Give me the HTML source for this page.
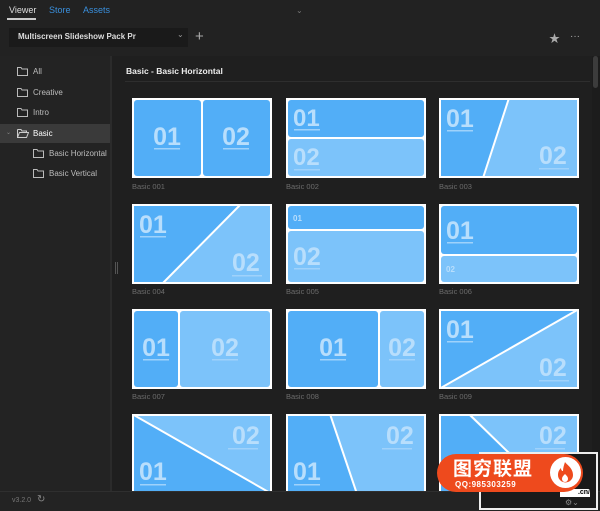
<!DOCTYPE html>
<html><head><meta charset="utf-8"><style>
*{margin:0;padding:0;box-sizing:border-box}
body{width:600px;height:511px;background:#1f1f1f;font-family:"Liberation Sans","Noto Sans CJK SC",sans-serif;position:relative;overflow:hidden;color:#ccc}
.abs{position:absolute}
.tab{position:absolute;top:5px;font-size:9px}
.side{position:absolute;left:0;top:56px;width:110px;height:435px;background:#232323}
.item{position:absolute;left:0;width:110px;height:19px;font-size:8px;color:#bdbdbd;line-height:19px}
.item svg{position:absolute;top:5px}
.lbl{position:absolute;font-size:7.5px;color:#6c6c6c}
svg text{font-family:"Liberation Sans",sans-serif;font-weight:bold;fill:#b8defc}
svg .s{fill:#9fd2fb}
</style></head><body>
<div class="abs" style="left:0;top:0;width:600px;height:56px;background:#222"></div>
<div class="tab" style="left:9px;color:#ddd">Viewer</div>
<div class="abs" style="left:7px;top:18px;width:29px;height:1.5px;background:#ccc"></div>
<div class="tab" style="left:49px;color:#3a8fdc">Store</div>
<div class="tab" style="left:83px;color:#3a8fdc">Assets</div>
<div class="abs" style="left:296px;top:6px;font-size:8px;color:#777">&#8964;</div>
<div class="abs" style="left:9px;top:28px;width:179px;height:19px;background:#1a1a1a"></div>
<div class="abs" style="left:18px;top:32px;font-size:8px;font-weight:bold;color:#ddd">Multiscreen Slideshow Pack Pr</div>
<div class="abs" style="left:177px;top:30px;font-size:8px;color:#999">&#8964;</div>
<div class="abs" style="left:195px;top:28px;font-size:15px;color:#aaa;line-height:18px">+</div>
<div class="abs" style="left:549px;top:30px;font-size:11px;color:#aaa">&#9733;</div>
<div class="abs" style="left:570px;top:33px;font-size:10px;color:#aaa;line-height:8px">&middot;&middot;&middot;</div>
<div class="side"></div>
<div class="abs" style="left:110px;top:56px;width:2px;height:435px;background:#2b2b2b"></div>
<div class="abs" style="left:115px;top:262px;width:3px;height:12px;border-left:1px solid #555;border-right:1px solid #555"></div>
<div class="item" style="top:62px"><svg style="left:17px" width="11" height="9" viewBox="0 0 11 9"><path d="M.5 .5h3.5l1 1.5h5.5v6.5h-10z" fill="none" stroke="#bbb"/></svg><span style="position:absolute;left:33px">All</span></div>
<div class="item" style="top:83px"><svg style="left:17px" width="11" height="9" viewBox="0 0 11 9"><path d="M.5 .5h3.5l1 1.5h5.5v6.5h-10z" fill="none" stroke="#bbb"/></svg><span style="position:absolute;left:33px">Creative</span></div>
<div class="item" style="top:103px"><svg style="left:17px" width="11" height="9" viewBox="0 0 11 9"><path d="M.5 .5h3.5l1 1.5h5.5v6.5h-10z" fill="none" stroke="#bbb"/></svg><span style="position:absolute;left:33px">Intro</span></div>
<div class="item" style="top:124px;background:#3a3a3a;color:#fff"><span style="position:absolute;left:6px;font-size:6px;color:#888">&#8964;</span><svg style="left:17px" width="12" height="9" viewBox="0 0 12 9"><path d="M.5 .5h3.5l1 1.5h4.5v1.5M.5 8.5v-8M.5 8.5l2-5h9l-2 5z" fill="none" stroke="#ccc"/></svg><span style="position:absolute;left:33px">Basic</span></div>
<div class="item" style="top:144px"><svg style="left:33px" width="11" height="9" viewBox="0 0 11 9"><path d="M.5 .5h3.5l1 1.5h5.5v6.5h-10z" fill="none" stroke="#bbb"/></svg><span style="position:absolute;left:49px">Basic Horizontal</span></div>
<div class="item" style="top:164px"><svg style="left:33px" width="11" height="9" viewBox="0 0 11 9"><path d="M.5 .5h3.5l1 1.5h5.5v6.5h-10z" fill="none" stroke="#bbb"/></svg><span style="position:absolute;left:49px">Basic Vertical</span></div>
<div class="abs" style="left:126px;top:66px;font-size:8.5px;font-weight:bold;color:#eee">Basic - Basic Horizontal</div>
<div class="abs" style="left:125px;top:81px;width:465px;height:1px;background:#2e2e2e"></div>
<div class="abs" style="left:592px;top:56px;width:8px;height:435px;background:#1c1c1c"></div>
<div class="abs" style="left:593px;top:56px;width:5px;height:32px;border-radius:3px;background:#3c3c3c"></div>

<svg class="abs" style="left:132px;top:98px" width="140" height="80" viewBox="0 0 140 80">
<rect width="140" height="80" fill="#fff"/><rect x="2" y="2" width="67" height="76" rx="3" fill="#52aef7"/><rect x="71" y="2" width="67" height="76" rx="3" fill="#52aef7"/>
<text x="35" y="47" font-size="25" text-anchor="middle">01</text><text x="104" y="47" font-size="25" text-anchor="middle">02</text>
<rect class="s" x="22" y="50" width="26" height="1.5"/><rect class="s" x="91" y="50" width="26" height="1.5"/></svg>
<div class="lbl" style="left:132px;top:182px">Basic 001</div>
<svg class="abs" style="left:286px;top:98px" width="140" height="80" viewBox="0 0 140 80">
<rect width="140" height="80" fill="#fff"/><rect x="2" y="2" width="136" height="37" rx="3" fill="#52aef7"/><rect x="2" y="41" width="136" height="37" rx="3" fill="#7cc3fa"/>
<text x="7" y="28" font-size="24">01</text><text x="7" y="67" font-size="24">02</text>
<rect class="s" x="8" y="31" width="26" height="1.5"/><rect class="s" x="8" y="71" width="26" height="1.5"/></svg>
<div class="lbl" style="left:286px;top:182px">Basic 002</div>
<svg class="abs" style="left:439px;top:98px" width="140" height="80" viewBox="0 0 140 80">
<rect width="140" height="80" fill="#fff"/><rect x="2" y="2" width="136" height="76" fill="#7cc3fa"/><polygon points="2,2 69,2 44,78 2,78" fill="#52aef7"/><line x1="70" y1="0" x2="44" y2="80" stroke="#fff" stroke-width="2"/>
<text x="7" y="29" font-size="25">01</text><text x="100" y="66" font-size="25">02</text>
<rect class="s" x="8" y="32" width="26" height="1.5"/><rect class="s" x="100" y="70" width="30" height="1.5"/></svg>
<div class="lbl" style="left:439px;top:182px">Basic 003</div>
<svg class="abs" style="left:132px;top:204px" width="140" height="80" viewBox="0 0 140 80">
<rect width="140" height="80" fill="#fff"/><rect x="2" y="2" width="136" height="76" fill="#7cc3fa"/><polygon points="2,2 107,2 32,78 2,78" fill="#52aef7"/><line x1="109" y1="0" x2="30" y2="80" stroke="#fff" stroke-width="2"/>
<text x="7" y="29" font-size="25">01</text><text x="100" y="67" font-size="25">02</text>
<rect class="s" x="8" y="32" width="26" height="1.5"/><rect class="s" x="100" y="71" width="30" height="1.5"/></svg>
<div class="lbl" style="left:132px;top:287px">Basic 004</div>
<svg class="abs" style="left:286px;top:204px" width="140" height="80" viewBox="0 0 140 80">
<rect width="140" height="80" fill="#fff"/><rect x="2" y="2" width="136" height="23" rx="3" fill="#52aef7"/><rect x="2" y="27" width="136" height="51" rx="3" fill="#7cc3fa"/>
<text x="7" y="17" font-size="8">01</text><text x="7" y="61" font-size="25">02</text>
<rect class="s" x="8" y="64" width="26" height="1.5"/></svg>
<div class="lbl" style="left:286px;top:287px">Basic 005</div>
<svg class="abs" style="left:439px;top:204px" width="140" height="80" viewBox="0 0 140 80">
<rect width="140" height="80" fill="#fff"/><rect x="2" y="2" width="136" height="48" rx="3" fill="#52aef7"/><rect x="2" y="52" width="136" height="26" rx="3" fill="#7cc3fa"/>
<text x="7" y="35" font-size="25">01</text><text x="7" y="68" font-size="8">02</text>
<rect class="s" x="8" y="38" width="26" height="1.5"/></svg>
<div class="lbl" style="left:439px;top:287px">Basic 006</div>
<svg class="abs" style="left:132px;top:309px" width="140" height="80" viewBox="0 0 140 80">
<rect width="140" height="80" fill="#fff"/><rect x="2" y="2" width="44" height="76" rx="3" fill="#52aef7"/><rect x="48" y="2" width="90" height="76" rx="3" fill="#7cc3fa"/>
<text x="24" y="47" font-size="25" text-anchor="middle">01</text><text x="93" y="47" font-size="25" text-anchor="middle">02</text>
<rect class="s" x="11" y="50" width="26" height="1.5"/><rect class="s" x="80" y="50" width="26" height="1.5"/></svg>
<div class="lbl" style="left:132px;top:392px">Basic 007</div>
<svg class="abs" style="left:286px;top:309px" width="140" height="80" viewBox="0 0 140 80">
<rect width="140" height="80" fill="#fff"/><rect x="2" y="2" width="90" height="76" rx="3" fill="#52aef7"/><rect x="94" y="2" width="44" height="76" rx="3" fill="#7cc3fa"/>
<text x="47" y="47" font-size="25" text-anchor="middle">01</text><text x="116" y="47" font-size="25" text-anchor="middle">02</text>
<rect class="s" x="34" y="50" width="26" height="1.5"/><rect class="s" x="103" y="50" width="26" height="1.5"/></svg>
<div class="lbl" style="left:286px;top:392px">Basic 008</div>
<svg class="abs" style="left:439px;top:309px" width="140" height="80" viewBox="0 0 140 80">
<rect width="140" height="80" fill="#fff"/><rect x="2" y="2" width="136" height="76" fill="#7cc3fa"/><polygon points="2,2 138,2 2,78" fill="#52aef7"/><line x1="140" y1="0" x2="0" y2="80" stroke="#fff" stroke-width="2"/>
<text x="7" y="29" font-size="25">01</text><text x="100" y="67" font-size="25">02</text>
<rect class="s" x="8" y="32" width="26" height="1.5"/><rect class="s" x="100" y="71" width="30" height="1.5"/></svg>
<div class="lbl" style="left:439px;top:392px">Basic 009</div>
<svg class="abs" style="left:132px;top:414px" width="140" height="80" viewBox="0 0 140 80">
<rect width="140" height="80" fill="#fff"/><rect x="2" y="2" width="136" height="76" fill="#52aef7"/><polygon points="2,2 138,2 138,78" fill="#7cc3fa"/><line x1="0" y1="0" x2="140" y2="80" stroke="#fff" stroke-width="2"/>
<text x="100" y="30" font-size="25">02</text><text x="7" y="66" font-size="25">01</text>
<rect class="s" x="96" y="34" width="30" height="1.5"/><rect class="s" x="8" y="70" width="26" height="1.5"/></svg>
<svg class="abs" style="left:286px;top:414px" width="140" height="80" viewBox="0 0 140 80">
<rect width="140" height="80" fill="#fff"/><rect x="2" y="2" width="136" height="76" fill="#7cc3fa"/><polygon points="2,2 45,2 70,78 2,78" fill="#52aef7"/><line x1="44" y1="0" x2="71" y2="80" stroke="#fff" stroke-width="2"/>
<text x="100" y="30" font-size="25">02</text><text x="7" y="66" font-size="25">01</text>
<rect class="s" x="96" y="34" width="30" height="1.5"/><rect class="s" x="8" y="70" width="26" height="1.5"/></svg>
<svg class="abs" style="left:439px;top:414px" width="140" height="80" viewBox="0 0 140 80">
<rect width="140" height="80" fill="#fff"/><rect x="2" y="2" width="136" height="76" fill="#7cc3fa"/><polygon points="2,2 30,2 110,78 2,78" fill="#52aef7"/><line x1="30" y1="0" x2="112" y2="80" stroke="#fff" stroke-width="2"/>
<text x="100" y="30" font-size="25">02</text><rect class="s" x="96" y="34" width="30" height="1.5"/></svg>
<div class="abs" style="left:0;top:491px;width:600px;height:20px;background:#232323;border-top:1px solid #2f2f2f"></div>
<div class="abs" style="left:12px;top:497px;font-size:7px;color:#777">v3.2.0</div>
<div class="abs" style="left:37px;top:494px;font-size:10px;color:#888">&#8635;</div>
<div class="abs" style="left:479px;top:452px;width:119px;height:58px;background:#1a1a1a;border:2px solid #eee"></div>
<div class="abs" style="left:560px;top:489px;width:30px;height:8px;background:#fff;font-size:7px;color:#000;font-weight:bold;line-height:8px;text-align:right">.cn/</div>
<div class="abs" style="left:565px;top:498px;font-size:8px;color:#888">&#9881;&#8964;</div>
<div class="abs" style="left:437px;top:454px;width:146px;height:38px;border-radius:19px;background:#ee4a1d"></div>
<div class="abs" style="left:453px;top:456px;font-size:19px;font-weight:bold;color:#fff;font-family:'Noto Sans CJK SC',sans-serif;letter-spacing:1px;line-height:24px">图穷联盟</div>
<div class="abs" style="left:455px;top:480px;font-size:8px;font-weight:bold;color:#fff;letter-spacing:.5px">QQ:985303259</div>
<div class="abs" style="left:550px;top:457px;width:31px;height:31px;border-radius:50%;background:#fff"></div>
<svg class="abs" style="left:555px;top:460px" width="21" height="25" viewBox="0 0 21 25"><path d="M10 2c2 3 8 6 8 13a7.5 7.5 0 0 1-15 0c0-4 2-6 3-7 0 2 1 3 2 3 0-3 1-6 2-9z" fill="#ee4a1d"/><path d="M10 14c2 2 3 3 3 5a3 3 0 0 1-6 0c0-2 1-3 3-5z" fill="#fff"/></svg>
</body></html>
